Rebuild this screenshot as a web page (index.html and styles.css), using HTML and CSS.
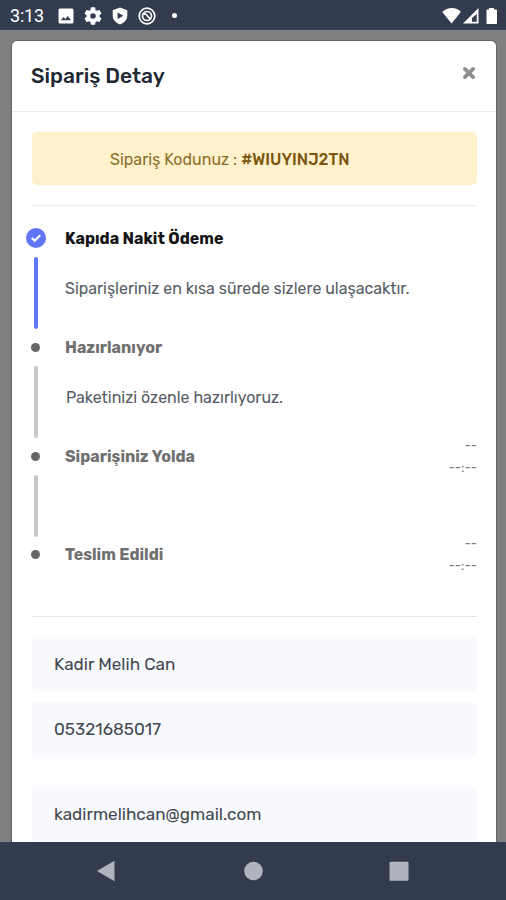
FILE: index.html
```
<!DOCTYPE html>
<html lang="tr">
<head>
  <meta charset="UTF-8">
  <meta name="viewport" content="width=device-width, initial-scale=1">
  <title>Sipariş Detay</title>
  <link rel="stylesheet" href="styles.css">
</head>
<body>
  <div class="status-bar">
    <span class="clock">3:13</span>
    <div class="status-icons">
      <svg width="16" height="16" viewBox="0 0 16 16"><path fill="#fff" fill-rule="evenodd" d="M2 .5h12A1.5 1.5 0 0 1 15.500 2v12a1.500 1.500 0 0 1-1.500 1.500H2A1.500 1.500 0 0 1 .5 14V2A1.500 1.500 0 0 1 2 .5zM3 12.300h10L9.800 8 7.300 11 5.500 9z"/></svg>
      <svg width="18" height="18" viewBox="2 2 20 20"><path fill="#fff" d="M19.140 12.940c.04-.3.060-.61.060-.94 0-.32-.02-.64-.07-.94l2.030-1.580a.49.49 0 0 0 .12-.61l-1.920-3.320a.488.488 0 0 0-.59-.22l-2.390.96c-.5-.38-1.030-.7-1.620-.94l-.36-2.540a.484.484 0 0 0-.48-.41h-3.840c-.24 0-.43.17-.47.41l-.36 2.540c-.59.24-1.130.57-1.620.94l-2.390-.96c-.22-.08-.47 0-.59.22L2.740 8.870c-.12.21-.08.47.12.61l2.030 1.580c-.05.3-.09.63-.09.94s.02.64.07.94l-2.030 1.580a.49.49 0 0 0-.12.61l1.920 3.320c.12.22.37.29.59.22l2.390-.96c.5.38 1.030.7 1.620.94l.36 2.540c.05.24.24.41.48.41h3.840c.24 0 .44-.17.47-.41l.36-2.540c.59-.24 1.130-.56 1.620-.94l2.390.96c.22.08.47 0 .59-.22l1.920-3.320c.12-.22.07-.47-.12-.61l-2.010-1.580zM12 15.100A3.100 3.100 0 1 1 12 8.900a3.100 3.100 0 0 1 0 6.200z"/></svg>
      <svg width="16" height="18" viewBox="0 0 16 18"><path fill="#fff" fill-rule="evenodd" d="M8 .5l7.300 2.700v5.300c0 4-3 7.500-7.300 9C3.700 16 .7 12.500.7 8.500V3.200zM5.600 5.500v6.600L11.300 8.800z"/></svg>
      <svg width="18" height="18" viewBox="0 0 18 18" fill="none" stroke="#fff"><circle cx="9" cy="9" r="7.800" stroke-width="1.700"/><circle cx="9" cy="9" r="4.500" stroke-width="1.700"/><path stroke-width="1.600" d="M5.500 7.500c2-1.500 3 0 4 1.500s2 2.500 3.500 3.500"/></svg>
      <i class="more-dot"></i>
    </div>
    <svg class="signal" width="56" height="18" viewBox="0 0 56 18" fill="#fff"><path d="M.3 5C5.500-.3 14.500-.3 18.800 5L9.600 16.600z"/><path fill-rule="evenodd" d="M21 16.500L36.500 1v15.500zM30 14.700h4.800V7L30 11z"/><path d="M47 1h5v1.500h2c.7 0 1 .4 1 1V16c0 .6-.4 1-1 1h-8.500c-.6 0-1-.4-1-1V3.500c0-.6.400-1 1-1H47z"/></svg>
  </div>

  <div class="backdrop">
    <div class="modal">
      <div class="modal-header">
        <h1 class="modal-title">Sipariş Detay</h1>
        <svg class="close" width="14" height="14" viewBox="0 0 14 14"><path fill="none" stroke="#8f8f8f" stroke-width="3.800" stroke-linecap="round" d="M2.900 2.900l8.200 8.200M11.100 2.900l-8.200 8.200"/></svg>
      </div>
      <div class="modal-body">
        <div class="alert"><span>Sipariş Kodunuz : </span><b class="order-code">#WIUYINJ2TN</b></div>

        <ul class="timeline">
          <li class="step active">
            <div class="marker">
              <svg width="20" height="20" viewBox="0 0 20 20"><circle cx="10" cy="10" r="10" fill="#5f76f8"/><path fill="none" stroke="#fff" stroke-width="2.200" d="M5.800 10l2.900 2.800 5.500-5.500"/></svg>
              <i class="line"></i>
            </div>
            <div class="step-text">
              <h2 class="step-title">Kapıda Nakit Ödeme</h2>
              <p class="desc">Siparişleriniz en kısa sürede sizlere ulaşacaktır.</p>
            </div>
          </li>
          <li class="step">
            <div class="marker"><i class="dot"></i><i class="line"></i></div>
            <div class="step-text">
              <h2 class="step-title">Hazırlanıyor</h2>
              <p class="desc indent">Paketinizi özenle hazırlıyoruz.</p>
            </div>
          </li>
          <li class="step short">
            <div class="marker"><i class="dot"></i><i class="line"></i></div>
            <div class="step-text">
              <h2 class="step-title">Siparişiniz Yolda</h2>
            </div>
            <div class="time"><span>--</span><span>--:--</span></div>
          </li>
          <li class="step">
            <div class="marker"><i class="dot"></i></div>
            <div class="step-text">
              <h2 class="step-title">Teslim Edildi</h2>
            </div>
            <div class="time"><span>--</span><span>--:--</span></div>
          </li>
        </ul>

        <div class="fields">
          <div class="field">Kadir Melih Can</div>
          <div class="field">05321685017</div>
          <div class="field mail">kadirmelihcan@gmail.com</div>
        </div>
      </div>
    </div>
  </div>

  <div class="nav-bar">
    <svg width="506" height="58" viewBox="0 0 506 58" fill="#afb4be"><path d="M97 29l17.500-10.300v20.600z"/><circle cx="253.500" cy="29" r="9.300"/><rect x="389.500" y="19.700" width="19" height="19" rx="1"/></svg>
  </div>
</body>
</html>
```
FILE: styles.css
```
* {
  box-sizing: border-box;
}
body {
  margin: 0;
  height: 900px;
  display: flex;
  flex-direction: column;
  overflow: hidden;
  font-family: Rubik, Roboto, sans-serif;
  color: #212529;
}
h1, h2, p, ul {
  margin: 0;
  padding: 0;
}
svg {
  display: block;
  flex: none;
}

/* status bar */
.status-bar {
  flex: none;
  height: 30px;
  padding: 1px 8px 0 10px;
  display: flex;
  align-items: center;
  background: #333b4e;
  color: #fff;
}
.clock {
  width: 48px;
  font: 18px Roboto, sans-serif;
  letter-spacing: -0.2px;
}
.status-icons {
  display: flex;
  align-items: center;
  gap: 10px;
}
.more-dot {
  width: 5px;
  height: 5px;
  margin-left: 6px;
  border-radius: 50%;
  background: #fff;
}
.signal {
  margin-left: auto;
}

/* modal */
.backdrop {
  flex: none;
  height: 812px;
  padding: 11px 10px 0 12px;
  background: #7f7f7f;
  overflow: hidden;
}
.modal {
  height: 820px;
  background: #fff;
  border-radius: 5px 5px 0 0;
  box-shadow: 0 0 0 1px #666;
}
.modal-header {
  height: 71px;
  padding: 0 20px 0 19px;
  display: flex;
  justify-content: space-between;
  border-bottom: 1px solid #e9ecef;
}
.modal-title {
  padding-top: 21px;
  font-size: 21px;
  line-height: 28px;
  font-weight: 500;
  color: #212833;
}
.close {
  margin-top: 25px;
}
.modal-body {
  padding: 20px 19px 0 20px;
}
.alert {
  height: 53px;
  display: flex;
  align-items: center;
  padding: 1px 0 0 78px;
  border-radius: 5px;
  background: #fff1cb;
  color: #8d702c;
  font-size: 16px;
  white-space: pre;
}
.order-code {
  color: #7b560d;
  font-weight: 500;
}

/* timeline */
.timeline {
  list-style: none;
  margin-top: 20px;
  margin-left: -6px;
  padding-top: 23px;
  height: 411px;
  background: linear-gradient(#ececee, #ececee) 6px 0 / 100% 1px no-repeat;
}
.step {
  height: 109px;
  display: flex;
}
.step.short {
  height: 98px;
}
.marker {
  flex: none;
  width: 19px;
  display: flex;
  flex-direction: column;
  align-items: center;
}
.dot {
  width: 9px;
  height: 9px;
  margin: 6px 0 5px;
  border-radius: 50%;
  background: #666;
}
.line {
  width: 4px;
  height: 72px;
  margin-top: 9px;
  border-radius: 2px;
  background: #c8c8c8;
}
.short .line {
  height: 62px;
}
.active .line {
  background: #5f76f8;
}
.step-text {
  margin-left: 20px;
  padding-top: 1px;
  flex: 1;
  white-space: nowrap;
}
.step-title {
  font-size: 16px;
  line-height: 20px;
  font-weight: 700;
  color: #707070;
}
.active .step-title {
  color: #151515;
}
.desc {
  margin-top: 30px;
  font-size: 15.95px;
  line-height: 20px;
  color: #565c64;
}
.indent {
  padding-left: 1px;
}
.time {
  display: flex;
  flex-direction: column;
  align-items: flex-end;
  margin-top: -11px;
  font-size: 13px;
  line-height: 22px;
  color: #808080;
}

/* customer info */
.fields {
  border-top: 1px solid #e3e3e5;
  padding-top: 20px;
}
.field {
  height: 55px;
  margin-bottom: 10px;
  padding: 0 0 2px 22px;
  display: flex;
  align-items: center;
  border-radius: 4px;
  background: #f9fafe;
  font-size: 17.1px;
  color: #424850;
}
.mail {
  margin-top: 30px;
}

.nav-bar {
  flex: none;
  height: 58px;
  background: #333b4e;
}
```
